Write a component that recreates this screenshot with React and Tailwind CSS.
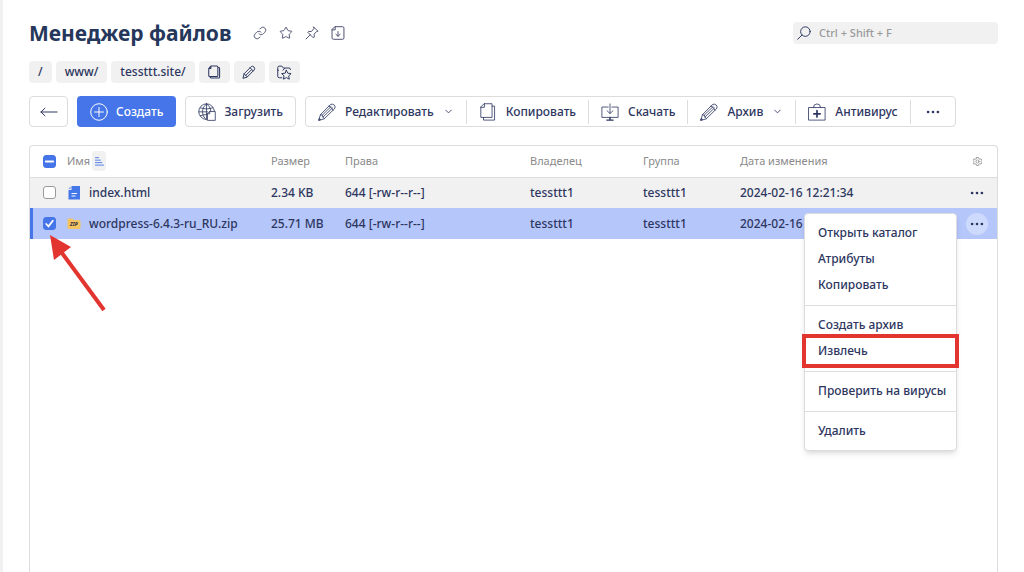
import React, { useEffect, useRef, useState } from 'react';
import { Link, Star, ChevronDown } from 'lucide-react';

function Svg({ size = 20, className = '', children, ...rest }) {
  return (
    <svg
      width={size}
      height={size}
      viewBox="0 0 20 20"
      fill="none"
      stroke="currentColor"
      strokeWidth={0.9}
      strokeLinecap="round"
      strokeLinejoin="round"
      className={`shrink-0 ${className}`}
      aria-hidden="true"
      {...rest}
    >
      {children}
    </svg>
  );
}

const PinIcon = () => (
  <Svg size={14} strokeWidth={1.4}>
    <path d="M12.500 1.500l6 6-2 .5-3.500 3.700.3 4-1.300 1.300-8-8L5.300 7.700l3.700.3 3.500-4zM7.500 12.500L1.500 18.500" />
  </Svg>
);

const FileDownIcon = () => (
  <Svg size={14} strokeWidth={1.4}>
    <path d="M6 1h10.500q2 0 2 2v14q0 2-2 2h-13q-2 0-2-2V5.500zM6 1v4.500H1.500M10 8v6.500M7 11.800l3 2.900 3-2.900" />
  </Svg>
);

const PagesIcon = () => (
  <Svg size={14} strokeWidth={1.5}>
    <path d="M5.500 1.500h8.500q1.500 0 1.500 1.500v12q0 1.500-1.500 1.500H4q-1.500 0-1.500-1.500V5zM5.500 1.500V5H2.500M17 3.500q1 .5 1 1.500v12q0 1.500-1.500 1.500H6q-1 0-1.500-1" />
  </Svg>
);

const SmallPencilIcon = () => (
  <Svg size={14} strokeWidth={1.4}>
    <path d="M1.500 18.500l1.500-6L13 2.500q2-1.700 4 .2t.5 4.300L7.500 17zM3 12.500l4.500 4.500M11.500 4l4.500 4.500M5.500 14.800l8-8" />
  </Svg>
);

const FolderStarIcon = () => (
  <Svg size={15} strokeWidth={1.3}>
    <path d="M6.500 17H3q-2 0-2-2V3.500q0-2 2-2h3.500l2 2.500h7.500q2 0 2 2M1 7h1M10 4.500L8 7" />
    <path d="M12.500 7l1.900 3.900 4.400.6-3.200 3 .8 4.400-3.900-2.100-3.900 2.100.8-4.400-3.200-3 4.400-.6z" />
  </Svg>
);

const BackIcon = () => (
  <Svg size={18} strokeWidth={1.1}>
    <path d="M19 10H1M5.500 5.800L1 10l4.500 4.200" />
  </Svg>
);

const PlusIcon = () => (
  <Svg size={18} strokeWidth={1.1}>
    <circle cx="10" cy="10" r="9.200" />
    <path d="M10 5v10M5 10h10" />
  </Svg>
);

const GlobeIcon = () => (
  <Svg size={18}>
    <path d="M9 18.300A8.700 8.700 0 1 1 18.200 9M9 18.300C3.500 14 3.500 5 9.500 1M9.500 1c3 2 4.500 4.500 4.700 8M9.500 1v17M1 9.800h9.500M2.500 5.500q7 2.500 14 0M2.500 14.200q3.500-1.600 7-1.300" />
    <path d="M13 9.500h6.200v9.800h-8.700V12zM13 9.500V12h-2.500" />
  </Svg>
);

const PencilIcon = () => (
  <Svg size={18}>
    <path d="M1 19l1.700-6L13.500 2q2.300-1.800 4.500.2t.2 4.400L7.200 17.300zM2.700 13l2 .5.8 2.200 1.700 1.600M12 3.500q3 .2 4.700 4.500M4.700 13.500L14.500 4M5.500 15.700L16 5.600M1 19l1.800-.5-1-1.300z" />
  </Svg>
);

const CopyIcon = () => (
  <Svg size={18}>
    <path d="M6 .800h8.500v15.200H2V4.800zM6 .800v4H2M14.500 3.500h2.800v15.500H5V16" />
  </Svg>
);

const DownloadIcon = () => (
  <Svg size={18}>
    <path d="M8 4.500H1v11.500h18V4.500h-7M10 1v10.500M6.800 8.700l3.200 3 3.200-3" />
    <path d="M10 16v2.500M6.500 19h7" strokeWidth="1.600" />
  </Svg>
);

const MedKitIcon = () => (
  <Svg size={18}>
    <path d="M1 5h18v14H1zM6 5q0-4 4-4t4 4" />
    <path d="M10 8.500v7M6.500 12h7" strokeWidth="1.900" />
  </Svg>
);

const DotsIcon = () => (
  <Svg size={14} fill="currentColor" stroke="none">
    <circle cx="3" cy="10" r="1.900" />
    <circle cx="10" cy="10" r="1.900" />
    <circle cx="17" cy="10" r="1.900" />
  </Svg>
);

const SearchIcon = () => (
  <Svg size={14} strokeWidth={1.4}>
    <circle cx="12" cy="8" r="6.800" />
    <path d="M7 13l-6 6" />
  </Svg>
);

const GearIcon = () => (
  <Svg size={9} strokeWidth={1.8}>
    <path d="M8 1h4l.8 2.600 2.500 1.300 2.700-.6 1.500 3.200L17.800 10l1.700 2.500-1.500 3.200-2.700-.6-2.500 1.300L12 19H8l-.8-2.600-2.500-1.300-2.700.6L.5 12.500 2.200 10 .5 7.500 2 4.300l2.700.6 2.500-1.300z" />
    <circle cx="10" cy="10" r="3.500" />
  </Svg>
);

const DocIcon = () => (
  <svg width="14" height="14" viewBox="0 0 14 14" aria-hidden="true">
    <path d="M4.500 0h8.500v13.500H1.500V4h3z" fill="#4477e8" />
    <path d="M1.500 2.800L3.500.8v2z" fill="#4477e8" />
    <path d="M4.500 7.500h5.500M4.500 10h4" stroke="#fff" />
  </svg>
);

const ZipIcon = () => (
  <svg width="14" height="14" viewBox="0 0 14 14" aria-hidden="true">
    <path d="M1.500 1.500h4l1.300 1.500H12q1.500 0 1.500 1.500v6Q13.500 12 12 12H2Q.5 12 .5 10.500v-8q0-1 1-1z" fill="#f5c35f" />
    <text x="7" y="9" textAnchor="middle" fontSize="5" fontWeight="800" fontStyle="italic" fill="#3a3540">
      ZIP
    </text>
  </svg>
);

function Checkbox({ label, checked, indeterminate = false, onChange }) {
  const ref = useRef(null);

  useEffect(() => {
    ref.current.indeterminate = indeterminate;
  }, [indeterminate]);

  const filled = checked || indeterminate;

  return (
    <label className="relative block size-[13px]">
      <input
        ref={ref}
        type="checkbox"
        aria-label={label}
        checked={checked}
        onChange={onChange}
        className={`block size-[13px] appearance-none rounded-[3px] border ${
          filled ? 'border-[#4575e8] bg-[#4575e8]' : 'border-[#999999] bg-white'
        }`}
      />
      {filled && (
        <svg className="pointer-events-none absolute inset-0" viewBox="0 0 13 13" fill="none" stroke="#fff" strokeWidth="1.8" strokeLinecap="round">
          <path d={indeterminate ? 'M2.800 6.500h7.400' : 'M3.200 7l2.300 2.400L9.800 3.700'} />
        </svg>
      )}
    </label>
  );
}

const toolbar = [
  { label: 'Редактировать', icon: PencilIcon, dropdown: true },
  { label: 'Копировать', icon: CopyIcon },
  { label: 'Скачать', icon: DownloadIcon },
  { label: 'Архив', icon: PencilIcon, dropdown: true },
  { label: 'Антивирус', icon: MedKitIcon },
];

const headerActions = [
  { label: 'Ссылка', icon: <Link size={14} strokeWidth={1.5} /> },
  { label: 'В избранное', icon: <Star size={14} strokeWidth={1.6} /> },
  { label: 'Закрепить', icon: <PinIcon /> },
  { label: 'Экспорт', icon: <FileDownIcon /> },
];

const pathActions = [
  { label: 'Копировать путь', icon: <PagesIcon /> },
  { label: 'Изменить путь', icon: <SmallPencilIcon /> },
  { label: 'Избранные каталоги', icon: <FolderStarIcon /> },
];

const files = [
  { name: 'index.html', icon: DocIcon, size: '2.34 KB', mode: '644 [-rw-r--r--]', owner: 'tessttt1', group: 'tessttt1', date: '2024-02-16 12:21:34' },
  { name: 'wordpress-6.4.3-ru_RU.zip', icon: ZipIcon, size: '25.71 MB', mode: '644 [-rw-r--r--]', owner: 'tessttt1', group: 'tessttt1', date: '2024-02-16 12:22:10' },
];

const menuGroups = [
  ['Открыть каталог', 'Атрибуты', 'Копировать'],
  ['Создать архив', 'Извлечь'],
  ['Проверить на вирусы'],
  ['Удалить'],
];

function ContextMenu() {
  return (
    <div className="absolute top-[5px] right-10 z-10 w-[153px] rounded border border-[#dcdce0] bg-white py-1.5 text-left shadow-md">
      {menuGroups.map((group, i) => (
        <div key={group[0]} className={i > 0 ? 'mt-[7px] border-t border-[#dddddd] pt-1.5' : ''}>
          {group.map((item) => (
            <button key={item} className="relative block h-[26px] w-full px-[13px] text-left whitespace-nowrap">
              {item}
              {item === 'Извлечь' && (
                <span className="pointer-events-none absolute -inset-x-[3px] -inset-y-1 border-4 border-[#e23530]" />
              )}
            </button>
          ))}
        </div>
      ))}
    </div>
  );
}

function Pointer() {
  return (
    <svg className="pointer-events-none absolute top-[27px] left-5 z-10" width="56" height="78" viewBox="0 0 56 78" aria-hidden="true">
      <path d="M12 18L54 75" stroke="#e23530" strokeWidth="4" />
      <path d="M0 0L21 12L4 25z" fill="#e23530" />
    </svg>
  );
}

export default function App() {
  const [selected, setSelected] = useState(['wordpress-6.4.3-ru_RU.zip']);
  const [openMenu, setOpenMenu] = useState('wordpress-6.4.3-ru_RU.zip');

  const toggle = (name) => {
    setSelected((prev) => (prev.includes(name) ? prev.filter((n) => n !== name) : [...prev, name]));
  };

  const allSelected = selected.length === files.length;

  return (
    <div className="flex min-h-screen flex-col border-l-[3px] border-[#f1f1f1] bg-white px-[26px] pt-4 font-['Noto_Sans',sans-serif] text-xs font-medium text-[#2d3660]">
      {/* Title and search */}
      <header className="flex h-[34px] items-center justify-between">
        <div className="flex items-center gap-[22px]">
          <h1 className="text-[21px] leading-[34px] font-bold text-[#26375c]">Менеджер файлов</h1>
          <div className="flex items-center gap-3 text-[#4b5070]">
            {headerActions.map((action) => (
              <button key={action.label} aria-label={action.label}>
                {action.icon}
              </button>
            ))}
          </div>
        </div>
        <div className="flex h-[22px] w-[205px] items-center gap-2 rounded bg-[#f1f1f1] px-1">
          <SearchIcon />
          <input
            type="search"
            aria-label="Поиск"
            placeholder="Ctrl + Shift + F"
            className="min-w-0 flex-1 bg-transparent text-[11px] outline-none placeholder:text-[#999999]"
          />
        </div>
      </header>

      {/* Path */}
      <nav className="mt-[11px] flex gap-1">
        {['/', 'www/', 'tessttt.site/'].map((part) => (
          <a key={part} href="#" className="flex h-[22px] items-center rounded bg-[#f1f1f1] px-[9px]">
            {part}
          </a>
        ))}
        {pathActions.map((action) => (
          <button key={action.label} aria-label={action.label} className="flex h-[22px] w-[31px] items-center justify-center rounded bg-[#f1f1f1]">
            {action.icon}
          </button>
        ))}
      </nav>

      {/* Toolbar */}
      <div className="mt-[13px] flex h-[31px] gap-[9px]">
        <button aria-label="Назад" className="flex w-[39px] items-center justify-center rounded border border-[#dcdcdc]">
          <BackIcon />
        </button>
        <button className="flex items-center gap-2 rounded bg-[#4575e8] px-[13px] text-white">
          <PlusIcon />
          Создать
        </button>
        <button className="flex items-center gap-2 rounded border border-[#dcdcdc] px-3">
          <GlobeIcon />
          Загрузить
        </button>
        <div className="flex items-center divide-x divide-[#dcdcdc] rounded border border-[#dcdcdc]">
          {toolbar.map((item) => (
            <button key={item.label} className="flex h-6 items-center gap-[9px] px-3">
              <item.icon />
              {item.label}
              {item.dropdown && <ChevronDown size={11} strokeWidth={1.8} />}
            </button>
          ))}
          <button aria-label="Ещё" className="flex h-6 w-11 items-center justify-center">
            <DotsIcon />
          </button>
        </div>
      </div>

      {/* File list */}
      <main className="mt-[18px] flex-1 rounded-t border border-b-0 border-[#dcdcdc]">
        <table className="w-full table-fixed text-left whitespace-nowrap">
          <colgroup>
            <col className="w-[37px]" />
            <col />
            <col className="w-[74px]" />
            <col className="w-[185px]" />
            <col className="w-[113px]" />
            <col className="w-[97px]" />
            <col className="w-[217px]" />
            <col className="w-10" />
          </colgroup>
          <thead>
            <tr className="h-[31px] border-b border-[#dcdcdc] text-[11px] text-[#8a8a8a]">
              <th className="pl-[13px]">
                <Checkbox
                  label="Выбрать все"
                  checked={allSelected}
                  indeterminate={selected.length > 0 && !allSelected}
                  onChange={() => setSelected(allSelected ? [] : files.map((f) => f.name))}
                />
              </th>
              <th className="font-normal">
                <button className="flex items-center gap-0.5">
                  Имя
                  <span className="flex h-5 w-[14px] items-center justify-center rounded bg-[#f1f1f1] text-[#4575e8]">
                    <Svg size={9} strokeWidth={2}>
                      <path d="M1 1.500h7M1 7h11M1 12.500h14M1 18h18" />
                    </Svg>
                  </span>
                </button>
              </th>
              <th className="font-normal">Размер</th>
              <th className="font-normal">Права</th>
              <th className="font-normal">Владелец</th>
              <th className="font-normal">Группа</th>
              <th className="font-normal">Дата изменения</th>
              <th>
                <button aria-label="Настройки" className="flex w-full justify-center">
                  <GearIcon />
                </button>
              </th>
            </tr>
          </thead>
          <tbody>
            {files.map((file) => {
              const isSelected = selected.includes(file.name);
              const isOpen = openMenu === file.name;
              return (
                <tr key={file.name} className={`h-[31px] ${isSelected ? 'bg-[#b5c6fb]' : 'bg-[#f1f1f1]'}`}>
                  <td className={`relative pl-[13px] ${isSelected ? 'shadow-[inset_3px_0_0_#4575e8]' : ''}`}>
                    <Checkbox label={file.name} checked={isSelected} onChange={() => toggle(file.name)} />
                    {isSelected && <Pointer />}
                  </td>
                  <td>
                    <a href="#" className="flex items-center gap-2">
                      <file.icon />
                      {file.name}
                    </a>
                  </td>
                  <td>{file.size}</td>
                  <td>{file.mode}</td>
                  <td>{file.owner}</td>
                  <td>{file.group}</td>
                  <td>{file.date}</td>
                  <td className="relative">
                    <button
                      aria-label="Действия"
                      onClick={() => setOpenMenu(isOpen ? '' : file.name)}
                      className={`mx-auto flex size-[22px] items-center justify-center rounded-full ${isOpen ? 'bg-[#cddafd]' : ''}`}
                    >
                      <DotsIcon />
                    </button>
                    {isOpen && <ContextMenu />}
                  </td>
                </tr>
              );
            })}
          </tbody>
        </table>
      </main>
    </div>
  );
}
